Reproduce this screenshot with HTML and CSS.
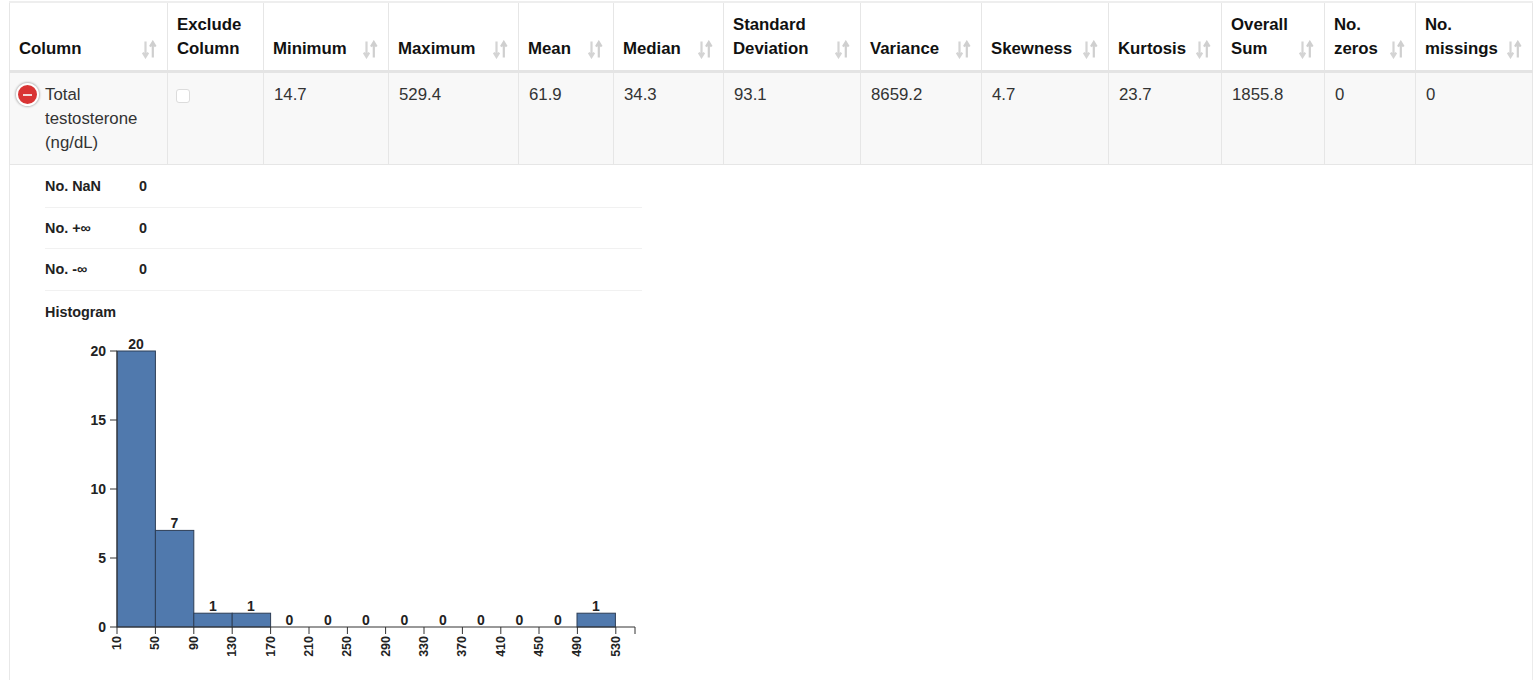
FILE: index.html
```html
<!DOCTYPE html>
<html lang="en">
<head>
<meta charset="utf-8">
<title>Column statistics</title>
<link rel="stylesheet" href="styles.css">
</head>
<body>
<div class="panel">
<table class="stats">
<colgroup>
<col class="c1"><col class="c2"><col class="c3"><col class="c4"><col class="c5"><col class="c6"><col class="c7"><col class="c8"><col class="c9"><col class="c10"><col class="c11"><col class="c12"><col class="c13">
</colgroup>
<thead>
<tr>
<th><div class="h">Column<svg class="sort" viewBox="0 0 16 19"><use href="#s"/></svg></div></th>
<th><div class="h">Exclude Column</div></th>
<th><div class="h">Minimum<svg class="sort" viewBox="0 0 16 19"><use href="#s"/></svg></div></th>
<th><div class="h">Maximum<svg class="sort" viewBox="0 0 16 19"><use href="#s"/></svg></div></th>
<th><div class="h">Mean<svg class="sort" viewBox="0 0 16 19"><use href="#s"/></svg></div></th>
<th><div class="h">Median<svg class="sort" viewBox="0 0 16 19"><use href="#s"/></svg></div></th>
<th><div class="h"><span class="lbl">Standard Deviation</span><svg class="sort" viewBox="0 0 16 19"><use href="#s"/></svg></div></th>
<th><div class="h">Variance<svg class="sort" viewBox="0 0 16 19"><use href="#s"/></svg></div></th>
<th><div class="h">Skewness<svg class="sort" viewBox="0 0 16 19"><use href="#s"/></svg></div></th>
<th><div class="h">Kurtosis<svg class="sort" viewBox="0 0 16 19"><use href="#s"/></svg></div></th>
<th><div class="h"><span class="lbl">Overall Sum</span><svg class="sort" viewBox="0 0 16 19"><use href="#s"/></svg></div></th>
<th><div class="h"><span class="lbl">No. zeros</span><svg class="sort" viewBox="0 0 16 19"><use href="#s"/></svg></div></th>
<th><div class="h"><span class="lbl">No. missings</span><svg class="sort" viewBox="0 0 16 19"><use href="#s"/></svg></div></th>
</tr>
</thead>
<tbody>
<tr>
<td class="first"><span class="toggle"><span class="minus"></span></span>Total testosterone (ng/dL)</td>
<td><span class="check"></span></td>
<td>14.7</td><td>529.4</td><td>61.9</td><td>34.3</td><td>93.1</td><td>8659.2</td><td>4.7</td><td>23.7</td><td>1855.8</td><td>0</td><td>0</td>
</tr>
</tbody>
</table>
<div class="details">
<div class="drow"><span class="dk">No. NaN</span><span>0</span></div>
<div class="drow"><span class="dk">No. +∞</span><span>0</span></div>
<div class="drow"><span class="dk">No. -∞</span><span>0</span></div>
<div class="hist-title">Histogram</div>
</div>
<svg class="chart" width="660" height="340" viewBox="0 0 660 340">
<defs>
<symbol id="s" viewBox="0 0 16 19">
<path d="M4.500 1.500V16M1.800 12.600L4.500 17l2.700-4.400" fill="none" stroke="#d4d4d4" stroke-width="2.200"/>
<path d="M11.800 17.500V2.500M9 6.600L11.800 2l2.800 4.600" fill="none" stroke="#cfcfcf" stroke-width="2.200"/>
</symbol>
</defs>
<g class="bars">
<rect x="107" y="19" width="38.400" height="276"/>
<rect x="145.400" y="198.400" width="38.400" height="96.600"/>
<rect x="183.800" y="281.200" width="38.400" height="13.800"/>
<rect x="222.200" y="281.200" width="38.400" height="13.800"/>
<rect x="567" y="281.200" width="38.400" height="13.800"/>
</g>
<path class="axis" d="M100 295H625V302M107 19V295M100 19H107M100 226H107M100 157H107M100 88H107M107 295v7M145.400 295v7M183.800 295v7M222.200 295v7M260.600 295v7M299 295v7M337.400 295v7M375.600 295v7M414 295v7M452.400 295v7M490.800 295v7M529 295v7M567.400 295v7M605.800 295v7"/>
<g class="ylab">
<text x="96" y="24">20</text><text x="96" y="93">15</text><text x="96" y="162">10</text><text x="96" y="231">5</text><text x="96" y="300">0</text>
</g>
<g class="count">
<text x="126" y="17">20</text><text x="164.500" y="196">7</text><text x="202.800" y="279">1</text><text x="241" y="279">1</text><text x="279.500" y="293">0</text><text x="318" y="293">0</text><text x="356" y="293">0</text><text x="394.500" y="293">0</text><text x="433" y="293">0</text><text x="471" y="293">0</text><text x="509.500" y="293">0</text><text x="548" y="293">0</text><text x="586" y="279">1</text>
</g>
<g class="xlab">
<text transform="translate(111 304) rotate(-90)">10</text>
<text transform="translate(149.400 304) rotate(-90)">50</text>
<text transform="translate(187.800 304) rotate(-90)">90</text>
<text transform="translate(226.200 304) rotate(-90)">130</text>
<text transform="translate(264.600 304) rotate(-90)">170</text>
<text transform="translate(303 304) rotate(-90)">210</text>
<text transform="translate(341.400 304) rotate(-90)">250</text>
<text transform="translate(379.600 304) rotate(-90)">290</text>
<text transform="translate(418 304) rotate(-90)">330</text>
<text transform="translate(456.400 304) rotate(-90)">370</text>
<text transform="translate(494.800 304) rotate(-90)">410</text>
<text transform="translate(533 304) rotate(-90)">450</text>
<text transform="translate(571.400 304) rotate(-90)">490</text>
<text transform="translate(609.800 304) rotate(-90)">530</text>
</g>
</svg>
</div>
</body>
</html>
```
FILE: styles.css
```css
html, body {
  margin: 0;
  padding: 0;
  background: #fff;
  height: 680px;
  overflow: hidden;
}
body {
  font-family: "Liberation Sans", Arial, sans-serif;
  color: #333;
  padding-top: 1px;
  box-sizing: border-box;
}
.panel {
  margin-left: 9px;
  width: 1524px;
  height: 679px;
  box-sizing: border-box;
  border-left: 1px solid #e8e8e8;
  border-right: 1px solid #ececec;
}
.stats {
  width: 1523px;
  margin-left: -1px;
  border-collapse: collapse;
  table-layout: fixed;
  font-size: 16.800px;
  line-height: 24px;
}
.c1 { width: 158px; }
.c2 { width: 96px; }
.c3 { width: 125px; }
.c4 { width: 130px; }
.c5 { width: 95px; }
.c6 { width: 110px; }
.c7 { width: 137px; }
.c8 { width: 121px; }
.c9 { width: 127px; }
.c10 { width: 113px; }
.c11 { width: 103px; }
.c12 { width: 91px; }
.c13 { width: 117px; }
.stats th, .stats td {
  border: 1px solid #e6e6e6;
  vertical-align: top;
  text-align: left;
}
.stats thead th {
  border-top: 2px solid #eeeeee;
  border-bottom: 3px solid #e4e4e4;
  vertical-align: bottom;
  color: #111;
  font-weight: 700;
  padding: 10px 10px 9px 9px;
}
.stats tbody td {
  background: #f8f8f8;
  padding: 10px 10px 9px;
  color: #333;
}
.h {
  display: flex;
  align-items: flex-end;
  justify-content: space-between;
  column-gap: 6px;
}
.lbl { display: block; }
.sort {
  width: 16px;
  height: 19px;
  flex: none;
  margin: 0 0 2px 0;
}
.stats td.first {
  padding-left: 35px;
  position: relative;
}
.toggle {
  position: absolute;
  left: 6px;
  top: 10px;
  width: 19px;
  height: 19px;
  border-radius: 50%;
  background: #d93434;
  border: 2px solid #fff;
  box-shadow: 0 0 2px 1px #bdbdbd;
  display: flex;
  align-items: center;
  justify-content: center;
}
.minus {
  width: 9px;
  height: 2px;
  background: #f4d9d9;
}
.check {
  display: block;
  width: 12px;
  height: 12px;
  margin: 6px 0 0 -2px;
  background: #fff;
  border: 1px solid #dcdcdc;
  border-radius: 3px;
}
.details {
  width: 597px;
  margin: 1px 0 0 35px;
  font-size: 14.400px;
  font-weight: 700;
  color: #222;
}
.drow {
  display: flex;
  height: 40.500px;
  align-items: center;
  border-bottom: 1px solid #f1f1f1;
}
.dk { width: 94px; }
.hist-title {
  height: 40px;
  line-height: 42px;
}
.chart {
  display: block;
  margin-top: 1px;
}
.bars rect {
  fill: #5079ad;
  stroke: #2d3e56;
  stroke-width: 1;
}
.axis {
  fill: none;
  stroke: #333;
  stroke-width: 1;
}
.chart text {
  font-family: "Liberation Sans", Arial, sans-serif;
  font-weight: 700;
  font-size: 14px;
  fill: #222;
}
.ylab text { text-anchor: end; }
.count text { text-anchor: middle; }
.xlab text {
  text-anchor: end;
  font-size: 12.500px;
}
```
